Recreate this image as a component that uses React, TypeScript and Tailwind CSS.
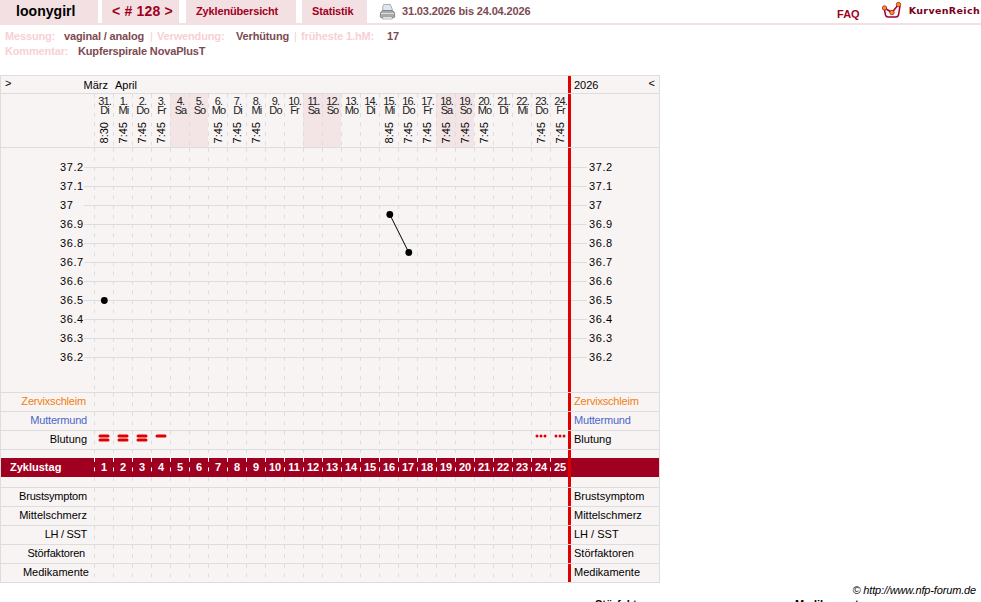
const days = [["31.","Di","8:30"],["1.","Mi","7:45"],["2.","Do","7:45"],["3.","Fr","7:45"],["4.","Sa",""],["5.","So",""],["6.","Mo","7:45"],["7.","Di","7:45"],["8.","Mi","7:45"],["9.","Do",""],["10.","Fr",""],["11.","Sa",""],["12.","So",""],["13.","Mo",""],["14.","Di",""],["15.","Mi","8:45"],["16.","Do","7:45"],["17.","Fr","7:45"],["18.","Sa","7:45"],["19.","So","7:45"],["20.","Mo","7:45"],["21.","Di",""],["22.","Mi",""],["23.","Do","7:45"],["24.","Fr","7:45"]];
const temps = ["37.2","37.1","37","36.9","36.8","36.7","36.6","36.5","36.4","36.3","36.2"];
const dash = "bg-[linear-gradient(#dddddd_36%,transparent_36%)] bg-[length:1px_9.5px] bg-repeat-y";

function Cells({ h, children }: { h: number; children?: (i: number) => React.ReactNode }) {
  return (
    <div className="flex w-[475px] shrink-0">
      {days.map((_, i) => (
        <div key={i} className={`w-[19px] shrink-0 ${dash} flex items-center justify-center`} style={{ height: h }}>
          {children ? children(i) : null}
        </div>
      ))}
    </div>
  );
}

function Bar() {
  return <div className="-ml-[1px] w-[3px] shrink-0 bg-[#e00000]" />;
}

function Row({ label, color = "text-black", left = "pr-[7px]", h = 18, border = true, mark }: { label?: string; color?: string; left?: string; h?: number; border?: boolean; mark?: (i: number) => React.ReactNode }) {
  return (
    <div className={`flex bg-[#f8f4f4] ${border ? "border-b border-[#dddddd]" : ""}`} style={{ height: border ? h + 1 : h }}>
      <div className={`w-[93px] shrink-0 text-right text-[11px] leading-[16px] ${color} ${left}`}>{label}</div>
      <Cells h={h}>{mark}</Cells>
      <Bar />
      <div className={`flex-1 pl-[3px] text-[11px] leading-[16px] ${color}`}>{label}</div>
    </div>
  );
}

function Bleed({ i }: { i: number }) {
  if (i < 3) return <div className="flex -translate-y-[2.5px] translate-x-[0.5px] flex-col gap-[1px]"><div className="h-[3px] w-[11px] rounded-full bg-[#e00000]" /><div className="h-[3px] w-[11px] rounded-full bg-[#e00000]" /></div>;
  if (i === 3) return <div className="h-[3px] w-[11px] -translate-y-[4.5px] translate-x-[0.5px] rounded-full bg-[#e00000]" />;
  if (i >= 23) return <div className="flex -translate-y-[4.5px] translate-x-[0.5px] gap-[1px]">{[0, 1, 2].map((k) => <div key={k} className="h-[3px] w-[3px] rounded-full bg-[#e00000]" />)}</div>;
  return null;
}

function Printer() {
  return (
    <svg width="17" height="18" viewBox="0 0 18 18">
      <path d="M5 1h7l2 5v3H4V3z" fill="#dfe6ee" stroke="#8b96a3" strokeWidth="0.8" />
      <path d="M1.5 9.5 4 7.5h10l2.5 2V14a1 1 0 0 1-1 1h-13a1 1 0 0 1-1-1z" fill="#a9a9a9" stroke="#6d6d6d" strokeWidth="0.8" />
      <path d="M2 10.5h14" stroke="#e4e4e4" strokeWidth="1" />
      <path d="M4 14h10v2.5H4z" fill="#f0f0f0" stroke="#8a8a8a" strokeWidth="0.6" />
    </svg>
  );
}

function Logo() {
  return (
    <svg width="20" height="17" viewBox="0 0 20 17" className="-ml-[1px] -mt-[9px]">
      <path d="M2.5 8 3.5 13q.5 2 2.500 2h8q2 0 2.500-2L18 4" fill="#fdf3f4" stroke="#a00030" strokeWidth="1.5" />
      <path d="M2.500 6 10 10.500 16.500 2.500" fill="none" stroke="#a00030" strokeWidth="1.500" />
      <circle cx="2.500" cy="6" r="2.200" fill="#f59a10" stroke="#a00030" strokeWidth="0.700" />
      <circle cx="10" cy="10.500" r="2.200" fill="#f59a10" stroke="#a00030" strokeWidth="0.700" />
      <circle cx="16.500" cy="2.500" r="2.200" fill="#f59a10" stroke="#a00030" strokeWidth="0.700" />
    </svg>
  );
}

function Plot() {
  return (
    <svg width="590" height="244" viewBox="0 0 590 244" className="absolute left-0 top-0">
      {temps.map((_, i) => (
        <g key={i}>
          <line x1="83" x2="567" y1={19.5 + i * 19} y2={19.5 + i * 19} stroke="#dddddd" />
          <line x1="570" x2="586" y1={19.5 + i * 19} y2={19.5 + i * 19} stroke="#dddddd" />
        </g>
      ))}
      <line x1="388.800" y1="66.500" x2="407.800" y2="104.500" stroke="#000" strokeWidth="1" />
      <circle cx="103.300" cy="152.500" r="3.400" fill="#000" />
      <circle cx="388.800" cy="66.500" r="3.400" fill="#000" />
      <circle cx="407.800" cy="104.500" r="3.400" fill="#000" />
    </svg>
  );
}

export default function App() {
  return (
    <div className="h-[602px] w-[981px] overflow-hidden bg-white font-['Liberation_Sans',Arial,sans-serif] text-[11px] text-black">
      <div className="flex h-[25px] items-start border-b-2 border-[#f3e0e2]">
        <div className="flex h-[23px] w-[98px] items-center bg-[#f3e0e2] pl-[16px] text-[14px] font-bold tracking-[0.05px] text-black">loonygirl</div>
        <div className="ml-[4px] flex h-[23px] w-[77px] items-center bg-[#f3e0e2] pl-[10px] text-[14px] font-bold tracking-[0.2px] text-[#a0001e]">&lt; # 128 &gt;</div>
        <div className="ml-[7px] flex h-[23px] w-[110px] items-center bg-[#f3e0e2] pl-[10px] text-[11px] font-bold tracking-[-0.15px] text-[#a0001e]">Zyklenübersicht</div>
        <div className="ml-[6px] flex h-[23px] w-[65px] items-center bg-[#f3e0e2] pl-[10px] text-[11px] font-bold tracking-[-0.15px] text-[#a0001e]">Statistik</div>
        <div className="ml-[12px] flex h-[23px] items-center text-[11px] font-bold tracking-[-0.15px] text-[#7d4a52]">
          <Printer />
          <span className="ml-[6px]">31.03.2026 bis 24.04.2026</span>
        </div>
        <div className="ml-auto flex h-[23px] items-center pt-[6px]">
          <span className="mr-[23px] text-[11px] font-bold text-[#a0001e]">FAQ</span>
          <Logo />
          <span className="ml-[7px] -mt-[7px] mr-[1px] font-['DejaVu_Sans',sans-serif] text-[9.5px] font-bold tracking-[0.35px] text-[#7a0020]">KurvenReich</span>
        </div>
      </div>
      <div className="h-[50px] pl-[5px] pt-[4px] text-[11px] font-bold leading-[15px] tracking-[-0.15px] text-[#7d4a52]">
        <div className="flex">
          <span className="w-[59px] text-[#f8d0d4]">Messung:</span>
          <span className="w-[86px]">vaginal / analog</span>
          <span className="w-[7px] font-normal text-[#f8d0d4]">|</span>
          <span className="w-[79px] text-[#f8d0d4]">Verwendung:</span>
          <span className="w-[58px]">Verhütung</span>
          <span className="w-[7px] font-normal text-[#f8d0d4]">|</span>
          <span className="w-[86px] text-[#f8d0d4]">früheste 1.hM:</span>
          <span>17</span>
        </div>
        <div className="flex">
          <span className="w-[73px] text-[#f8d0d4]">Kommentar:</span>
          <span>Kupferspirale NovaPlusT</span>
        </div>
      </div>

      <div className="w-[660px] border border-b-0 border-[#dddddd] bg-[#f8f4f4]">
        <div className="flex h-[18px] border-b border-[#dddddd] leading-[18px]">
          <div className="flex w-[93px] shrink-0 justify-between pl-[4px]">
            <span className="-mt-[2px]">&gt;</span>
            <span className="mr-[-14px] text-right">März</span>
          </div>
          <div className="w-[475px] shrink-0 pl-[21px]">April</div>
          <Bar />
          <div className="flex flex-1 justify-between pl-[3px] pr-[4px]">
            <span>2026</span>
            <span className="-mt-[2px]">&lt;</span>
          </div>
        </div>

        <div className="flex h-[54px] border-b border-[#dddddd]">
          <div className="w-[93px] shrink-0" />
          <div className="flex w-[475px] shrink-0">
            {days.map(([d, w, t], i) => (
              <div key={i} className={`flex w-[19px] shrink-0 flex-col items-center pl-[2px] ${dash} ${[4, 5, 11, 12, 18, 19].includes(i) ? "bg-[#f3e4e6]" : ""}`}>
                <div className="mt-[3px] whitespace-nowrap text-center text-[11px] leading-[9px] tracking-[-0.9px] text-[#222222]">{d}</div>
                <div className="whitespace-nowrap text-center text-[11px] leading-[9px] tracking-[-0.9px] text-[#222222]">{w}</div>
                <div className="mt-[6px] flex h-[24px] items-center justify-center">
                  {t ? <span className="rotate-180 text-[11px] leading-[11px] [writing-mode:vertical-rl]">{t}</span> : null}
                </div>
              </div>
            ))}
          </div>
          <Bar />
          <div className="flex-1" />
        </div>

        <div className="relative flex h-[245px] border-b border-[#dddddd]">
          <div className="w-[93px] shrink-0 pl-[59px] pt-[10px]">
            {temps.map((t) => (
              <div key={t} className="h-[19px] text-[11px] leading-[19px] tracking-[0.6px]">{t}</div>
            ))}
          </div>
          <Cells h={244} />
          <Bar />
          <div className="relative z-10 flex-1 pl-[18px] pt-[10px]">
            {temps.map((t) => (
              <div key={t} className="h-[19px] text-[11px] leading-[19px] tracking-[0.6px]">{t}</div>
            ))}
          </div>
          <Plot />
        </div>

        <Row label="Zervixschleim" color="text-[#f08010] tracking-[-0.2px]" left="pr-[8px]" />
        <Row label="Muttermund" color="text-[#4a68c8] tracking-[-0.2px]" />
        <Row label="Blutung" mark={(i) => <Bleed i={i} />} />
        <Row h={8} border={false} />

        <div className="flex h-[19px] bg-[#a00020] font-bold text-white">
          <div className="w-[93px] shrink-0 pl-[9px] text-[11px] leading-[19px]">Zyklustag</div>
          <div className="flex w-[475px] shrink-0">
            {days.map((_, i) => (
              <div key={i} className="w-[19px] shrink-0 bg-[linear-gradient(#ffffff_36%,transparent_36%)] bg-[length:1px_9.5px] bg-repeat-y pl-[1px] text-center text-[11px] leading-[19px]">{i + 1}</div>
            ))}
          </div>
          <Bar />
          <div className="flex-1" />
        </div>

        <Row h={10} />
        <Row label="Brustsymptom" left="pr-[7px] tracking-[-0.2px]" />
        <Row label="Mittelschmerz" />
        <Row label="LH / SST" left="pr-[7px] tracking-[-0.3px]" />
        <Row label="Störfaktoren" left="pr-[9px] tracking-[-0.2px]" />
        <Row label="Medikamente" left="pr-[5px]" />
      </div>

      <div className="flex h-[12px] justify-end pr-[5px] pt-px text-[11px] italic leading-[12px] tracking-[-0.15px] text-black">© http://www.nfp-forum.de</div>
      <div className="flex pl-[595px] pt-[1px] text-[11px] font-bold">
        <span className="w-[200px]">Störfaktoren</span>
        <span>Medikamente</span>
      </div>
    </div>
  );
}
